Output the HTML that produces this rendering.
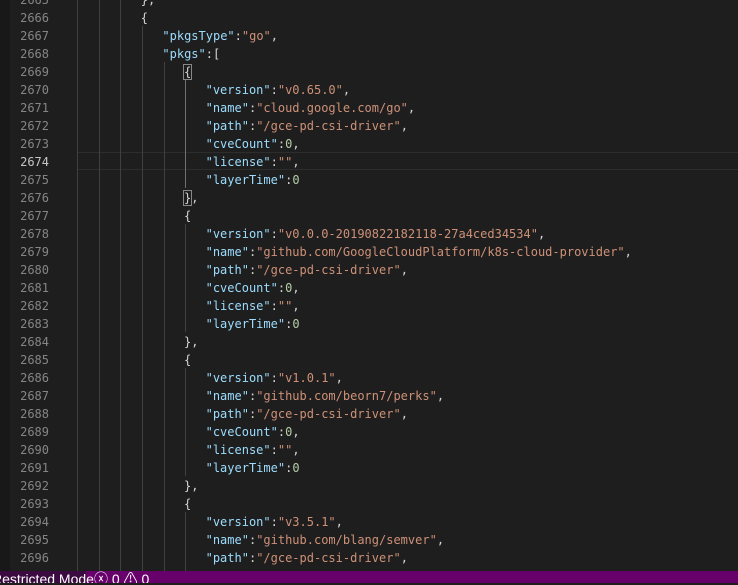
<!DOCTYPE html><html><head><style>
body{margin:0;width:738px;height:583px;overflow:hidden;background:#1e1e1e;position:relative;font-family:"DejaVu Sans Mono","Liberation Mono",monospace;font-size:12px}
.ln{position:absolute;left:0;width:49px;text-align:right;color:#858585;height:18px;line-height:18px}
.c{position:absolute;white-space:pre;color:#d4d4d4;height:18px;line-height:18px}
.k{color:#9cdcfe}.s{color:#ce9178}.n{color:#b5cea8}
.g{position:absolute;width:1px;background:#404040}
.bm{outline:1px solid #888;}
#strip{position:absolute;left:0;top:0;width:10px;height:571px;background:#181818}
#sb{position:absolute;left:0;top:571px;width:738px;height:12px;background:#68006c;color:#fff;font-family:"Liberation Sans",sans-serif;font-size:14px;line-height:17px;overflow:hidden}
</style></head><body>
<div id="strip"></div>
<div style="position:absolute;left:77px;top:152px;width:661px;height:16px;border-top:1px solid #2d2d2d;border-bottom:1px solid #2d2d2d"></div>
<div class="g" style="left:77px;top:0;height:571px"></div>
<div class="g" style="left:99px;top:0;height:571px"></div>
<div class="g" style="left:120px;top:0;height:571px"></div>
<div class="g" style="left:142px;top:26px;height:545px"></div>
<div class="g" style="left:164px;top:62px;height:509px"></div>
<div class="g" style="left:185px;top:80px;height:108px;background:#707070"></div>
<div class="g" style="left:185px;top:224px;height:108px"></div>
<div class="g" style="left:185px;top:368px;height:108px"></div>
<div class="g" style="left:185px;top:512px;height:59px"></div>
<div id="lines"></div>
<script>
var L=[
[2665,3,'},'],
[2666,3,'{'],
[2667,4,'<span class="k">"pkgsType"</span>:<span class="s">"go"</span>,'],
[2668,4,'<span class="k">"pkgs"</span>:['],
[2669,5,'<span class="bm">{</span>'],
[2670,6,'<span class="k">"version"</span>:<span class="s">"v0.65.0"</span>,'],
[2671,6,'<span class="k">"name"</span>:<span class="s">"cloud.google.com/go"</span>,'],
[2672,6,'<span class="k">"path"</span>:<span class="s">"/gce-pd-csi-driver"</span>,'],
[2673,6,'<span class="k">"cveCount"</span>:<span class="n">0</span>,'],
[2674,6,'<span class="k">"license"</span>:<span class="s">""</span>,'],
[2675,6,'<span class="k">"layerTime"</span>:<span class="n">0</span>'],
[2676,5,'<span class="bm">}</span>,'],
[2677,5,'{'],
[2678,6,'<span class="k">"version"</span>:<span class="s">"v0.0.0-20190822182118-27a4ced34534"</span>,'],
[2679,6,'<span class="k">"name"</span>:<span class="s">"github.com/GoogleCloudPlatform/k8s-cloud-provider"</span>,'],
[2680,6,'<span class="k">"path"</span>:<span class="s">"/gce-pd-csi-driver"</span>,'],
[2681,6,'<span class="k">"cveCount"</span>:<span class="n">0</span>,'],
[2682,6,'<span class="k">"license"</span>:<span class="s">""</span>,'],
[2683,6,'<span class="k">"layerTime"</span>:<span class="n">0</span>'],
[2684,5,'},'],
[2685,5,'{'],
[2686,6,'<span class="k">"version"</span>:<span class="s">"v1.0.1"</span>,'],
[2687,6,'<span class="k">"name"</span>:<span class="s">"github.com/beorn7/perks"</span>,'],
[2688,6,'<span class="k">"path"</span>:<span class="s">"/gce-pd-csi-driver"</span>,'],
[2689,6,'<span class="k">"cveCount"</span>:<span class="n">0</span>,'],
[2690,6,'<span class="k">"license"</span>:<span class="s">""</span>,'],
[2691,6,'<span class="k">"layerTime"</span>:<span class="n">0</span>'],
[2692,5,'},'],
[2693,5,'{'],
[2694,6,'<span class="k">"version"</span>:<span class="s">"v3.5.1"</span>,'],
[2695,6,'<span class="k">"name"</span>:<span class="s">"github.com/blang/semver"</span>,'],
[2696,6,'<span class="k">"path"</span>:<span class="s">"/gce-pd-csi-driver"</span>,'],
[2697,6,'<span class="k">"cveCount"</span>:<span class="n">0</span>,']
];
var h='';
L.forEach(function(r){var t=153+(r[0]-2674)*18;
h+='<div class="ln" style="top:'+t+'px;'+(r[0]==2674?'color:#c6c6c6':'')+'">'+r[0]+'</div>';
h+='<div class="c" style="top:'+t+'px;left:'+(76+r[1]*21.6)+'px">'+r[2]+'</div>';});
document.getElementById('lines').innerHTML=h;
</script>
<div id="sb"><div style="position:absolute;left:0;top:0;width:86px;height:12px;background:#3b0a40"></div><span style="position:absolute;left:-8px;top:0">Restricted Mode</span><span style="position:absolute;left:94px;top:0">ⓧ 0 ⚠ 0</span></div>
</body></html>
